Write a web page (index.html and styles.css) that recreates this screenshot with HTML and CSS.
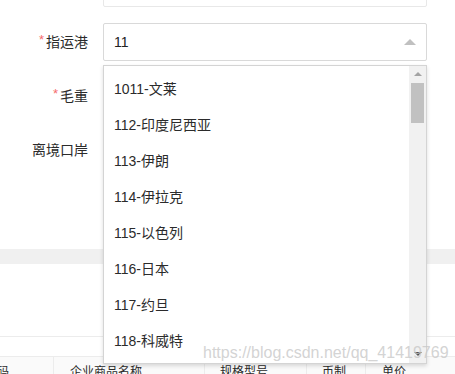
FILE: index.html
```html
<!DOCTYPE html>
<html lang="zh-CN">
<head>
<meta charset="utf-8">
<title>指运港</title>
<link rel="stylesheet" href="styles.css">
</head>
<body>
<div class="page">
  <form class="form">
    <div class="row">
      <label class="label"></label>
      <div class="input input-light"></div>
    </div>
    <div class="row">
      <label class="label"><span class="req">*</span>指运港</label>
      <div class="input">
        <span class="value">11</span>
        <span class="caret"></span>
      </div>
    </div>
    <div class="row">
      <label class="label"><span class="req">*</span>毛重</label>
    </div>
    <div class="row">
      <label class="label">离境口岸</label>
    </div>
  </form>
  <div class="band"></div>
  <div class="blank"></div>
  <div class="spacer"></div>
  <div class="thead">
    <div class="th th-1"><span class="cut">码</span></div>
    <div class="th th-2">企业商品名称</div>
    <div class="th th-3">规格型号</div>
    <div class="th th-4">币制</div>
    <div class="th th-5">单价</div>
  </div>

  <div class="dropdown">
    <ul class="options">
      <li>1011-文莱</li>
      <li>112-印度尼西亚</li>
      <li>113-伊朗</li>
      <li>114-伊拉克</li>
      <li>115-以色列</li>
      <li>116-日本</li>
      <li>117-约旦</li>
      <li>118-科威特</li>
    </ul>
    <div class="scrollbar">
      <span class="sb-up"></span>
      <span class="sb-thumb"></span>
      <span class="sb-track"></span>
      <span class="sb-down"></span>
    </div>
  </div>

  <div class="watermark">https://blog.csdn.net/qq_41419769</div>
</div>
</body>
</html>
```

FILE: styles.css
```css
html, body {
  margin: 0;
  padding: 0;
  background: #fff;
}
body {
  font-family: "Liberation Sans", "Noto Sans CJK SC", sans-serif;
  font-size: 14px;
  color: #333;
  overflow: hidden;
}
.page {
  position: relative;
  width: 455px;
  height: 374px;
  overflow: hidden;
}
.form {
  margin: -31px 0 0 0;
  padding: 0 0 64px 0;
}
.row {
  display: flex;
  align-items: center;
  height: 38px;
  margin-bottom: 16px;
}
.label {
  width: 88px;
  text-align: right;
  line-height: 20px;
  color: #2b2b2b;
  margin-right: 15px;
  white-space: nowrap;
}
.req {
  color: #f56c6c;
  margin-right: 2px;
  position: relative;
  top: -3px;
  font-size: 13px;
}
.input {
  box-sizing: border-box;
  width: 324px;
  height: 38px;
  border: 1px solid #d9d9d9;
  border-radius: 2px;
  display: flex;
  align-items: center;
  padding: 0 10px;
}
.input-light {
  border-color: #e8e8e8;
}
.value {
  flex: 1;
  color: #222;
  line-height: 20px;
}
.caret {
  width: 0;
  height: 0;
  border-left: 6px solid transparent;
  border-right: 6px solid transparent;
  border-bottom: 6px solid #c0c0c0;
  margin-right: 0;
}
.band {
  height: 15px;
  background: #f0f0f0;
}
.blank {
  height: 72px;
  border-bottom: 1px solid #ececec;
}
.spacer {
  height: 19px;
  border-bottom: 1px solid #ececec;
}
.thead {
  display: flex;
  height: 40px;
  background: #fafafa;
}
.th {
  box-sizing: border-box;
  padding: 5px 0 0 16px;
  font-size: 12px;
  line-height: 20px;
  border-right: 1px solid #ececec;
  white-space: nowrap;
  color: #2b2b2b;
}
.th-1 { width: 54px; padding-left: 0; }
.th-2 { width: 151px; padding-left: 16px; }
.th-3 { width: 102px; padding-left: 15px; }
.th-4 { width: 59px; padding-left: 15px; }
.th-5 { flex: 1; padding-left: 16px; border-right: 0; }
.cut {
  display: inline-block;
  margin-left: -3px;
  font-size: 12px;
}
.dropdown {
  position: absolute;
  left: 103px;
  top: 65px;
  box-sizing: border-box;
  width: 324px;
  height: 299px;
  border: 1px solid #d4d4d4;
  background: #fff;
  box-shadow: 0 2px 4px rgba(0, 0, 0, 0.14);
  display: flex;
}
.options {
  list-style: none;
  margin: 0;
  padding: 5px 0 0 0;
  flex: 1;
  overflow: hidden;
}
.options li {
  height: 36px;
  line-height: 36px;
  padding-left: 10px;
  color: #2b2b2b;
  white-space: nowrap;
}
.scrollbar {
  width: 17px;
  background: #f1f1f1;
  display: flex;
  flex-direction: column;
  align-items: center;
}
.sb-up {
  margin-top: 6px;
  width: 0;
  height: 0;
  border-left: 4px solid transparent;
  border-right: 4px solid transparent;
  border-bottom: 4px solid #a3a3a3;
}
.sb-thumb {
  margin-top: 7px;
  width: 13px;
  height: 40px;
  background: #c1c1c1;
}
.sb-track {
  flex: 1;
}
.sb-down {
  margin-bottom: 7px;
  width: 0;
  height: 0;
  border-left: 4px solid transparent;
  border-right: 4px solid transparent;
  border-top: 4px solid #505050;
}
.watermark {
  position: absolute;
  left: 203px;
  top: 343px;
  font-family: "Liberation Sans", sans-serif;
  font-size: 16px;
  line-height: 20px;
  color: rgba(200, 200, 200, 0.8);
  white-space: nowrap;
  pointer-events: none;
}
```
